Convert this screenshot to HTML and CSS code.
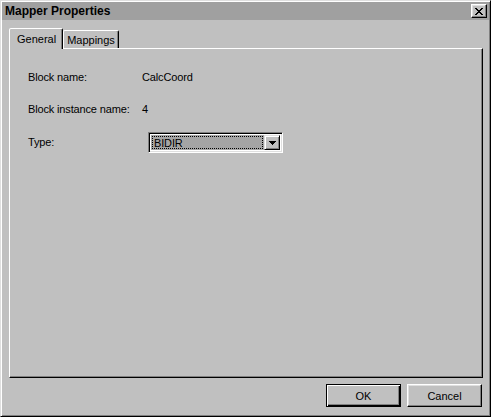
FILE: index.html
```html
<!DOCTYPE html>
<html lang="en">
<head>
    <meta charset="UTF-8">
    <title>Mapper Properties</title>
    <link rel="stylesheet" href="styles.css">
</head>
<body>
    <div class="window">
        <div class="titlebar">
            <span class="title">Mapper Properties</span>
            <div class="close">
                <svg width="8" height="7" viewBox="0 0 8 7">
                    <path d="M0 0h2v1h1v1h2v-1h1v-1h2v1h-1v1h-1v1h-1v1h1v1h1v1h1v1h-2v-1h-1v-1h-2v1h-1v1h-2v-1h1v-1h1v-1h1v-1h-1v-1h-1v-1h-1z" fill="#000"/>
                </svg>
            </div>
        </div>

        <div class="client">
            <div class="tabs">
                <div class="tab active">General</div>
                <div class="tab">Mappings</div>
            </div>

            <div class="panel">
                <div class="row">
                    <span class="label">Block name:</span>
                    <span class="value">CalcCoord</span>
                </div>
                <div class="row">
                    <span class="label">Block instance name:</span>
                    <span class="value">4</span>
                </div>
                <div class="row type-row">
                    <span class="label type-label">Type:</span>
                    <div class="combo">
                        <div class="combo-text"><span class="focus">BIDIR</span></div>
                        <div class="combo-btn">
                            <svg width="7" height="4" viewBox="0 0 7 4">
                                <path d="M0 0h7v1h-1v1h-1v1h-1v1h-1v-1h-1v-1h-1v-1h-1z" fill="#000"/>
                            </svg>
                        </div>
                    </div>
                </div>
            </div>

            <div class="buttons">
                <div class="btn default">OK</div>
                <div class="btn">Cancel</div>
            </div>
        </div>
    </div>
</body>
</html>
```

FILE: styles.css
```css
html, body {
    margin: 0;
    padding: 0;
    background: #c0c0c0;
}
body {
    font-family: "Liberation Sans", Arial, sans-serif;
    font-size: 11px;
    color: #000;
}
.window {
    box-sizing: border-box;
    width: 491px;
    height: 417px;
    padding: 1px;
    background: #c0c0c0;
    border: 1px solid;
    border-color: #dfdfdf #000 #000 #dfdfdf;
    box-shadow: inset 1px 1px #fff, inset -1px -1px #808080;
    display: flex;
    flex-direction: column;
}
.titlebar {
    height: 18px;
    background: #a0a0a0;
    display: flex;
    align-items: center;
    justify-content: space-between;
    padding: 0 2px 0 2px;
}
.title {
    font-weight: bold;
    font-size: 12px;
    padding-left: 1px;
}
.close {
    box-sizing: border-box;
    width: 16px;
    height: 14px;
    background: #c0c0c0;
    border: 1px solid;
    border-color: #fff #000 #000 #fff;
    box-shadow: inset -1px -1px #808080, inset 1px 1px #dfdfdf;
    display: flex;
    align-items: center;
    justify-content: center;
}
.client {
    padding: 8px 6px 0 7px;
    display: flex;
    flex-direction: column;
}
.tabs {
    display: flex;
    align-items: flex-end;
    height: 20px;
    position: relative;
    z-index: 1;
}
.tab {
    box-sizing: border-box;
    height: 18px;
    padding: 2px 3px 0 3px;
    border: 1px solid;
    border-bottom: none;
    border-color: #fff #000 transparent #fff;
    border-radius: 2px 2px 0 0;
    box-shadow: inset -1px 0 #808080;
    line-height: 14px;
}
.tab.active {
    height: 21px;
    margin-bottom: -1px;
    padding: 3px 6px 0 7px;
    background: #c0c0c0;
}
.panel {
    box-sizing: border-box;
    height: 330px;
    border: 1px solid;
    border-color: #fff #000 #000 #fff;
    box-shadow: inset -1px -1px #808080;
    padding: 22px 0 0 18px;
}
.row {
    display: flex;
    line-height: 13px;
    margin-bottom: 19px;
    letter-spacing: -0.15px;
}
.label {
    width: 114px;
}
.type-row {
    margin-top: -3px;
    align-items: center;
}
.type-label {
    width: 120px;
}
.combo {
    box-sizing: border-box;
    width: 135px;
    height: 21px;
    border: 1px solid;
    border-color: #808080 #fff #fff #808080;
    box-shadow: inset 1px 1px #000, inset -1px -1px #dfdfdf;
    padding: 2px;
    display: flex;
    background: #fff;
}
.combo-text {
    flex: 1;
    background: #a4a4a4;
    padding: 1px;
    display: flex;
}
.focus {
    flex: 1;
    border: 1px dotted #000;
    padding-left: 1px;
    line-height: 13px;
}
.combo-btn {
    box-sizing: border-box;
    width: 16px;
    background: #c0c0c0;
    border: 1px solid;
    border-color: #dfdfdf #000 #000 #dfdfdf;
    box-shadow: inset 1px 1px #fff, inset -1px -1px #808080;
    display: flex;
    align-items: center;
    justify-content: center;
}
.buttons {
    display: flex;
    justify-content: flex-end;
    gap: 6px;
    padding: 6px 1px 0 0;
}
.btn {
    box-sizing: border-box;
    width: 75px;
    height: 23px;
    border: 1px solid;
    border-color: #fff #000 #000 #fff;
    box-shadow: inset -1px -1px #808080, inset 1px 1px #dfdfdf;
    display: flex;
    align-items: center;
    justify-content: center;
}
.btn.default {
    border: 1px solid #000;
    box-shadow: inset 1px 1px #fff, inset -1px -1px #000, inset -2px -2px #808080;
}
```
